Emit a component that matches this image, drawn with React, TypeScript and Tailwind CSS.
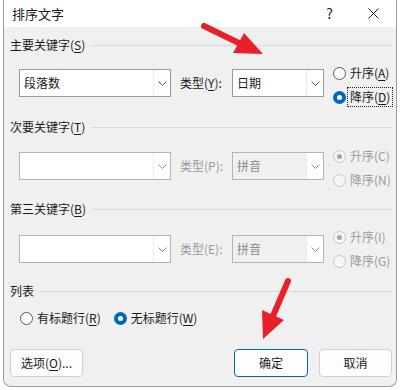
import React from "react";

const font = { fontFamily: '"Noto Sans CJK SC", "Noto Sans", sans-serif' };

function Key({ k }: { k: string }) {
  return <span className="underline underline-offset-2">{k}</span>;
}

function Chevron({ color = "#606060" }: { color?: string }) {
  return (
    <svg width="9" height="5" viewBox="0 0 9 5">
      <path d="M0.5 0.5 L4.5 4.5 L8.5 0.5" fill="none" stroke={color} strokeWidth="1" />
    </svg>
  );
}

function Combo({
  text,
  width,
  disabled,
  tinted,
}: {
  text?: string;
  width: string;
  disabled?: boolean;
  tinted?: boolean;
}) {
  return (
    <div
      className={`${width} h-[28px] flex border ${
        disabled ? "border-[#b4b4b4]" : "border-[#9a9a9a]"
      } ${tinted ? "bg-[#f0f0f0]" : "bg-white"}`}
    >
      <div
        className={`flex-1 flex items-center pl-[4px] text-[12px] ${
          disabled ? "text-[#8a8a8a]" : "text-[#1a1a1a]"
        }`}
      >
        {text}
      </div>
      <div className="w-[17px] flex items-center justify-center bg-white border-l border-[#ececec]">
        <Chevron color={disabled ? "#8c8c8c" : "#606060"} />
      </div>
    </div>
  );
}

function Radio({
  checked,
  disabled,
  children,
  focus,
}: {
  checked?: boolean;
  disabled?: boolean;
  children: React.ReactNode;
  focus?: boolean;
}) {
  let circle;
  if (checked && !disabled) {
    circle = (
      <div className="w-[13px] h-[13px] rounded-full bg-[#0067c0] flex items-center justify-center">
        <div className="w-[5px] h-[5px] rounded-full bg-white" />
      </div>
    );
  } else if (checked && disabled) {
    circle = (
      <div className="w-[13px] h-[13px] rounded-full border border-[#c6c6c6] bg-[#f6f6f6] flex items-center justify-center">
        <div className="w-[5px] h-[5px] rounded-full bg-[#a6a6a6]" />
      </div>
    );
  } else {
    circle = (
      <div
        className={`w-[13px] h-[13px] rounded-full border ${
          disabled ? "border-[#c6c6c6] bg-[#f6f6f6]" : "border-[#5a5a5a] bg-white"
        }`}
      />
    );
  }
  return (
    <div className="flex items-center h-[16px]">
      {circle}
      <span
        className={`ml-[3px] px-[1px] text-[12px] leading-[16px] ${
          disabled ? "text-[#9a9a9a]" : "text-[#1a1a1a]"
        } ${focus ? "outline outline-1 outline-dotted outline-[#222] outline-offset-[1px]" : ""}`}
      >
        {children}
      </span>
    </div>
  );
}

function Header({ children, mt }: { children: React.ReactNode; mt: string }) {
  return (
    <div className={`${mt} h-[16px] flex items-center pr-[4px]`}>
      <span className="text-[12px] leading-[16px] text-[#1a1a1a] whitespace-nowrap">{children}</span>
      <div className="flex-1 ml-[6px] h-px bg-[#d9d9d9]" />
    </div>
  );
}

function KeyRow({
  mt,
  keyText,
  label,
  typeText,
  disabled,
  up,
  down,
  comboMt,
  upChecked,
  focusDown,
}: {
  mt: string;
  keyText?: string;
  label: React.ReactNode;
  typeText: string;
  disabled?: boolean;
  up: React.ReactNode;
  down: React.ReactNode;
  comboMt: string;
  upChecked?: boolean;
  focusDown?: boolean;
}) {
  return (
    <div className={`${mt} flex items-start`}>
      <div className={`${comboMt} ml-[9px] flex items-center`}>
        <Combo text={keyText} width="w-[152px]" disabled={disabled} />
        <div
          className={`ml-[9px] w-[52px] text-[12px] ${
            disabled ? "text-[#9a9a9a]" : "text-[#1a1a1a]"
          }`}
        >
          {label}
        </div>
        <Combo text={typeText} width="w-[92px]" disabled={disabled} tinted={disabled} />
      </div>
      <div className="ml-[9px] flex flex-col gap-[8px]">
        <Radio checked={upChecked} disabled={disabled}>
          {up}
        </Radio>
        <Radio checked={!upChecked && !disabled} disabled={disabled} focus={focusDown}>
          {down}
        </Radio>
      </div>
    </div>
  );
}

function Button({ children, primary, width }: { children: React.ReactNode; primary?: boolean; width: string }) {
  return (
    <div
      className={`${width} h-[28px] rounded-[4px] bg-[#fdfdfd] flex items-center justify-center text-[12px] text-[#1a1a1a] border ${
        primary ? "border-[#0067c0]" : "border-[#d0d0d0]"
      }`}
    >
      {children}
    </div>
  );
}

export default function App() {
  return (
    <div className="relative w-[401px] h-[390px] bg-white overflow-hidden" style={font}>
      <div className="ml-[3px] w-[394px] h-[387px] border border-t-0 border-[#9c9c9c] rounded-b-[8px] bg-[#f0f0f0] flex flex-col overflow-hidden">
        {/* title bar */}
        <div className="h-[27px] bg-white flex items-center pl-[8px]">
          <span className="text-[13px] text-[#1a1a1a]">排序文字</span>
          <span className="ml-auto mr-[35px] text-[14px] text-[#1a1a1a]">?</span>
          <svg className="mr-[17px]" width="11" height="11" viewBox="0 0 11 11">
            <path d="M0.5 0.5 L10.5 10.5 M10.5 0.5 L0.5 10.5" stroke="#1a1a1a" strokeWidth="1" />
          </svg>
        </div>

        <div className="pl-[6px] flex flex-col">
          <Header mt="mt-[10px]">
            主要关键字(<Key k="S" />)
          </Header>
          <KeyRow
            mt="mt-[12px]"
            comboMt="mt-[4px]"
            keyText="段落数"
            label={
              <>
                类型(<Key k="Y" />):
              </>
            }
            typeText="日期"
            up={
              <>
                升序(<Key k="A" />)
              </>
            }
            down={
              <>
                降序(<Key k="D" />)
              </>
            }
            focusDown
          />

          <Header mt="mt-[14px]">
            次要关键字(<Key k="T" />)
          </Header>
          <KeyRow
            mt="mt-[13px]"
            comboMt="mt-[4px]"
            label="类型(P):"
            typeText="拼音"
            disabled
            upChecked
            up="升序(C)"
            down="降序(N)"
          />

          <Header mt="mt-[13px]">
            第三关键字(<Key k="B" />)
          </Header>
          <KeyRow
            mt="mt-[12px]"
            comboMt="mt-[6px]"
            label="类型(E):"
            typeText="拼音"
            disabled
            upChecked
            up="升序(I)"
            down="降序(G)"
          />

          <Header mt="mt-[14px]">列表</Header>
          <div className="mt-[11px] ml-[10px] flex items-center gap-[12px]">
            <Radio>
              有标题行(<Key k="R" />)
            </Radio>
            <Radio checked>
              无标题行(<Key k="W" />)
            </Radio>
          </div>

          <div className="mt-[23px] flex items-center pr-[4px]">
            <Button width="w-[73px]">
              选项(<Key k="O" />)...
            </Button>
            <div className="ml-auto flex gap-[11px]">
              <Button width="w-[74px]" primary>
                确定
              </Button>
              <Button width="w-[73px]">取消</Button>
            </div>
          </div>
        </div>
      </div>

      {/* red annotation arrows */}
      <svg className="absolute left-0 top-0 pointer-events-none" width="401" height="390" viewBox="0 0 401 390">
        <line x1="204" y1="26" x2="243" y2="45" stroke="#e8202a" strokeWidth="6" strokeLinecap="round" />
        <polygon points="233,53 244,33 263,54" fill="#e8202a" />
        <line x1="288" y1="281" x2="273" y2="316" stroke="#e8202a" strokeWidth="6" strokeLinecap="round" />
        <polygon points="262,310 284,320 263,339" fill="#e8202a" />
      </svg>
    </div>
  );
}
